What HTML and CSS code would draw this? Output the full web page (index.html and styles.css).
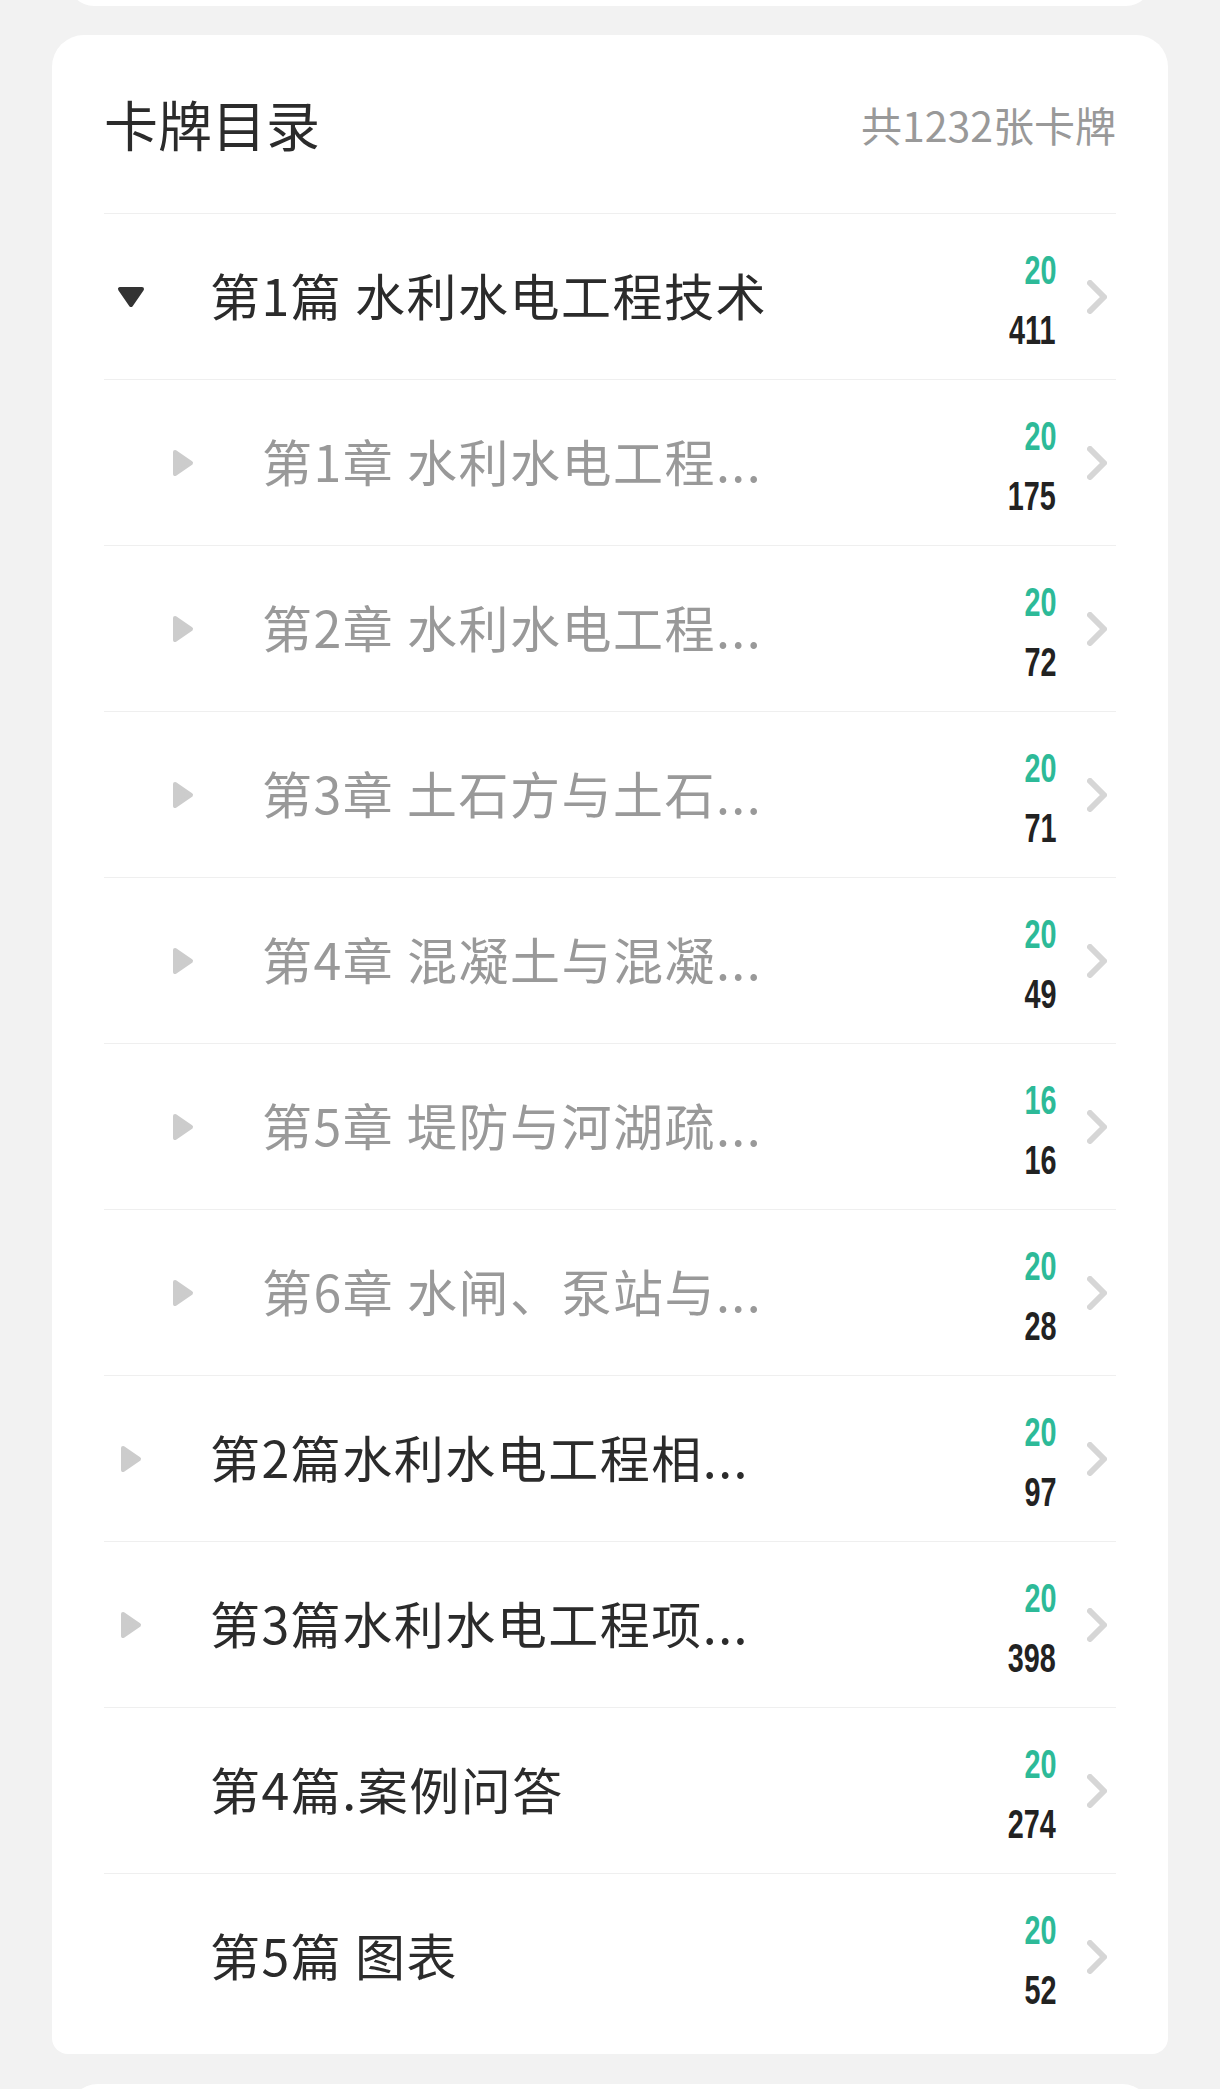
FILE: index.html
```html
<!DOCTYPE html>
<html lang="zh-CN">
<head>
  <meta charset="UTF-8">
  <meta name="viewport" content="width=device-width, initial-scale=1.0">
  <title>卡牌目录</title>
  <link rel="stylesheet" href="styles.css">
</head>
<body>

  <!-- Previous card (only its bottom edge is visible) -->
  <div class="card card-prev"></div>

  <!-- Card catalog -->
  <section class="card catalog">
    <div class="catalog-head">
      <h2>卡牌目录</h2>
      <span class="total">共1232张卡牌</span>
    </div>

    <ul class="tree">
      <li class="node">
        <span class="caret">
          <svg width="28" height="22" viewBox="0 0 28 22"><polygon points="3,3 25,3 14,19" class="tri-open"/></svg>
        </span>
        <span class="title">第1篇 水利水电工程技术</span>
        <span class="nums"><b class="due">20</b><b class="all">411</b></span>
        <svg class="chevron" width="20" height="34" viewBox="0 0 20 34"><path d="M3 3 L17 17 L3 31"/></svg>
      </li>
      <li class="node sub">
        <span class="caret">
          <svg width="22" height="28" viewBox="0 0 22 28"><polygon points="3,3 19,14 3,25" class="tri-closed"/></svg>
        </span>
        <span class="title">第1章 水利水电工程...</span>
        <span class="nums"><b class="due">20</b><b class="all">175</b></span>
        <svg class="chevron" width="20" height="34" viewBox="0 0 20 34"><path d="M3 3 L17 17 L3 31"/></svg>
      </li>
      <li class="node sub">
        <span class="caret">
          <svg width="22" height="28" viewBox="0 0 22 28"><polygon points="3,3 19,14 3,25" class="tri-closed"/></svg>
        </span>
        <span class="title">第2章 水利水电工程...</span>
        <span class="nums"><b class="due">20</b><b class="all">72</b></span>
        <svg class="chevron" width="20" height="34" viewBox="0 0 20 34"><path d="M3 3 L17 17 L3 31"/></svg>
      </li>
      <li class="node sub">
        <span class="caret">
          <svg width="22" height="28" viewBox="0 0 22 28"><polygon points="3,3 19,14 3,25" class="tri-closed"/></svg>
        </span>
        <span class="title">第3章 土石方与土石...</span>
        <span class="nums"><b class="due">20</b><b class="all">71</b></span>
        <svg class="chevron" width="20" height="34" viewBox="0 0 20 34"><path d="M3 3 L17 17 L3 31"/></svg>
      </li>
      <li class="node sub">
        <span class="caret">
          <svg width="22" height="28" viewBox="0 0 22 28"><polygon points="3,3 19,14 3,25" class="tri-closed"/></svg>
        </span>
        <span class="title">第4章 混凝土与混凝...</span>
        <span class="nums"><b class="due">20</b><b class="all">49</b></span>
        <svg class="chevron" width="20" height="34" viewBox="0 0 20 34"><path d="M3 3 L17 17 L3 31"/></svg>
      </li>
      <li class="node sub">
        <span class="caret">
          <svg width="22" height="28" viewBox="0 0 22 28"><polygon points="3,3 19,14 3,25" class="tri-closed"/></svg>
        </span>
        <span class="title">第5章 堤防与河湖疏...</span>
        <span class="nums"><b class="due">16</b><b class="all">16</b></span>
        <svg class="chevron" width="20" height="34" viewBox="0 0 20 34"><path d="M3 3 L17 17 L3 31"/></svg>
      </li>
      <li class="node sub">
        <span class="caret">
          <svg width="22" height="28" viewBox="0 0 22 28"><polygon points="3,3 19,14 3,25" class="tri-closed"/></svg>
        </span>
        <span class="title">第6章 水闸、泵站与...</span>
        <span class="nums"><b class="due">20</b><b class="all">28</b></span>
        <svg class="chevron" width="20" height="34" viewBox="0 0 20 34"><path d="M3 3 L17 17 L3 31"/></svg>
      </li>
      <li class="node">
        <span class="caret">
          <svg width="22" height="28" viewBox="0 0 22 28"><polygon points="3,3 19,14 3,25" class="tri-closed"/></svg>
        </span>
        <span class="title">第2篇水利水电工程相...</span>
        <span class="nums"><b class="due">20</b><b class="all">97</b></span>
        <svg class="chevron" width="20" height="34" viewBox="0 0 20 34"><path d="M3 3 L17 17 L3 31"/></svg>
      </li>
      <li class="node">
        <span class="caret">
          <svg width="22" height="28" viewBox="0 0 22 28"><polygon points="3,3 19,14 3,25" class="tri-closed"/></svg>
        </span>
        <span class="title">第3篇水利水电工程项...</span>
        <span class="nums"><b class="due">20</b><b class="all">398</b></span>
        <svg class="chevron" width="20" height="34" viewBox="0 0 20 34"><path d="M3 3 L17 17 L3 31"/></svg>
      </li>
      <li class="node">
        <span class="caret"></span>
        <span class="title">第4篇.案例问答</span>
        <span class="nums"><b class="due">20</b><b class="all">274</b></span>
        <svg class="chevron" width="20" height="34" viewBox="0 0 20 34"><path d="M3 3 L17 17 L3 31"/></svg>
      </li>
      <li class="node">
        <span class="caret"></span>
        <span class="title">第5篇 图表</span>
        <span class="nums"><b class="due">20</b><b class="all">52</b></span>
        <svg class="chevron" width="20" height="34" viewBox="0 0 20 34"><path d="M3 3 L17 17 L3 31"/></svg>
      </li>
    </ul>
  </section>

  <!-- Next card (only its top edge is visible) -->
  <div class="card card-next"></div>

</body>
</html>
```

FILE: styles.css
```css
/* Global Styles */
body {
  margin: 0;
  padding: 0;
  background-color: #f2f2f2;
  font-family: "Noto Sans CJK SC", "Noto Sans", sans-serif;
  color: #333;
  overflow: hidden;
}

.card {
  background: #fff;
}

/* Neighbour cards, cut off by the viewport */
.card-prev {
  height: 40px;
  margin: -34px 68px 0;
  border-radius: 0 0 26px 26px;
}
.card-next {
  height: 40px;
  margin: 30px 68px 0;
  border-radius: 30px 30px 0 0;
}

/* Catalog card */
.catalog {
  margin: 29px 52px 0;
  padding: 0 52px 15px;
  border-radius: 32px 32px 16px 16px;
}
.catalog-head {
  height: 178px;
  display: flex;
  align-items: center;
  justify-content: space-between;
}
.catalog-head h2 {
  margin: 0 0 2px;
  font-size: 54px;
  font-weight: 400;
  color: #2b2b2b;
}
.total {
  font-size: 41px;
  color: #999;
}

/* Tree rows */
.tree {
  list-style: none;
  margin: 0;
  padding: 0;
}
.node {
  height: 165px;
  border-top: 1px solid #efefef;
  display: flex;
  align-items: center;
}
.node.sub {
  padding-left: 52px;
}
.caret {
  width: 53px;
  margin-right: 53px;
  display: flex;
  justify-content: center;
  flex-shrink: 0;
}
.tri-open {
  fill: #333;
  stroke: #333;
  stroke-width: 4;
  stroke-linejoin: round;
}
.tri-closed {
  fill: #ccc;
  stroke: #ccc;
  stroke-width: 4;
  stroke-linejoin: round;
}
.title {
  flex: 1;
  padding-bottom: 5px;
  font-size: 50px;
  font-weight: 400;
  letter-spacing: 1.5px;
  color: #2b2b2b;
  white-space: nowrap;
}
.sub .title {
  color: #999;
}

/* Counts: narrow digits */
.nums {
  display: flex;
  flex-direction: column;
  align-items: flex-end;
  padding-top: 6px;
  font-family: "Liberation Sans", Arial, sans-serif;
  font-size: 40px;
  line-height: 60px;
}
.nums b {
  display: block;
  font-weight: 700;
  transform: scaleX(0.72);
  transform-origin: right center;
}
.due {
  color: #2dba98;
}
.all {
  color: #222;
}
.chevron {
  margin: 0 9px 0 31px;
  flex-shrink: 0;
}
.chevron path {
  fill: none;
  stroke: #d6d6d6;
  stroke-width: 6;
  stroke-linecap: round;
  stroke-linejoin: round;
}
```
